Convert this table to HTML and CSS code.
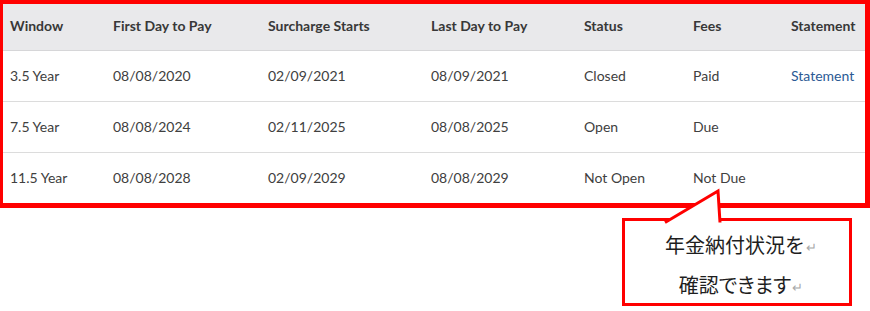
FILE: index.html
```html
<!DOCTYPE html>
<html lang="ja">
<head>
<meta charset="utf-8">
<title>Windows</title>
<link rel="stylesheet" href="styles.css">
</head>
<body>
<div class="page">
  <div class="frame">
    <div class="grid head">
      <div class="cell">Window</div>
      <div class="cell">First Day to Pay</div>
      <div class="cell">Surcharge Starts</div>
      <div class="cell">Last Day to Pay</div>
      <div class="cell">Status</div>
      <div class="cell">Fees</div>
      <div class="cell">Statement</div>
    </div>
    <div class="grid row">
      <div class="cell">3.5 Year</div>
      <div class="cell">08/08/2020</div>
      <div class="cell">02/09/2021</div>
      <div class="cell">08/09/2021</div>
      <div class="cell">Closed</div>
      <div class="cell">Paid</div>
      <div class="cell"><a class="link" href="#">Statement</a></div>
    </div>
    <div class="grid row">
      <div class="cell">7.5 Year</div>
      <div class="cell">08/08/2024</div>
      <div class="cell">02/11/2025</div>
      <div class="cell">08/08/2025</div>
      <div class="cell">Open</div>
      <div class="cell">Due</div>
      <div class="cell"></div>
    </div>
    <div class="grid row last">
      <div class="cell">11.5 Year</div>
      <div class="cell">08/08/2028</div>
      <div class="cell">02/09/2029</div>
      <div class="cell">08/08/2029</div>
      <div class="cell">Not Open</div>
      <div class="cell">Not Due</div>
      <div class="cell"></div>
    </div>
  </div>

  <div class="callout">
    <svg class="tail" width="80" height="40" viewBox="0 0 80 40">
      <polygon points="18,35 73,2 75,35" fill="#ffffff"/>
      <polyline points="20,33.5 73,2 75,33.5" fill="none" stroke="#ff0000" stroke-width="3" stroke-linejoin="miter"/>
    </svg>
    <p class="line">年金納付状況を<span class="mark">↵</span></p>
    <p class="line"><span class="kana">確認できます</span><span class="mark">↵</span></p>
  </div>
</div>
</body>
</html>
```

FILE: styles.css
```css
html, body {
  margin: 0;
  padding: 0;
  background: #ffffff;
}

.page {
  position: relative;
  width: 870px;
  height: 311px;
  font-family: Lato, "Open Sans", "Liberation Sans", sans-serif;
}

.frame {
  box-sizing: border-box;
  width: 870px;
  border-style: solid;
  border-color: #ff0000;
  border-width: 4px 5px 5px 3px;
  background: #ffffff;
}

.grid {
  display: grid;
  grid-template-columns: 103px 155px 163px 153px 109px 98px 1fr;
  align-items: center;
}

.cell {
  padding-left: 7px;
  white-space: nowrap;
}

.head {
  box-sizing: border-box;
  height: 47px;
  padding-bottom: 3px;
  background: #e9e9eb;
  border-bottom: 1px solid #d6d6d8;
  font-size: 14px;
  font-weight: 700;
  color: #383838;
}

.row {
  height: 51px;
  box-sizing: border-box;
  border-bottom: 1px solid #dcdcdc;
  font-size: 14px;
  color: #404040;
  padding-bottom: 1px;
}

.row.last {
  border-bottom: none;
  height: 50px;
}

.link {
  color: #2b5a94;
  text-decoration: none;
}

.callout {
  position: absolute;
  left: 622px;
  top: 218px;
  width: 230px;
  height: 88px;
  box-sizing: border-box;
  border: 3px solid #ff0000;
  background: #ffffff;
  padding: 5px 0 0 8px;
  font-family: "Noto Sans CJK JP", "Noto Sans", sans-serif;
  font-size: 20px;
  color: #1e1e1e;
  text-align: center;
}

.tail {
  position: absolute;
  left: 20px;
  top: -32px;
  overflow: visible;
}

.line {
  margin: 0;
  line-height: 38px;
  position: relative;
}

.kana {
  font-feature-settings: "palt";
}

.mark {
  font-size: 13px;
  color: #a8a8a8;
  margin-left: 1px;
  vertical-align: 1px;
}
```
